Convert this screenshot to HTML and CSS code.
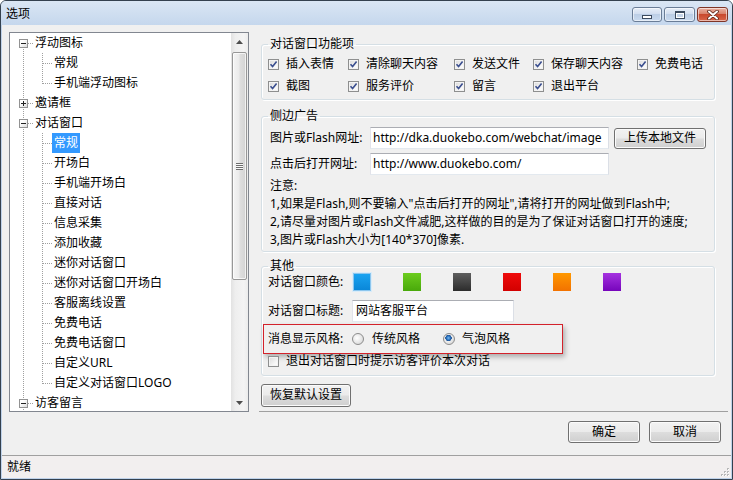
FILE: index.html
```html
<!DOCTYPE html>
<html lang="zh-CN">
<head>
<meta charset="utf-8">
<title>选项</title>
<link rel="stylesheet" href="styles.css">
</head>
<body>
<div class="window">
  <div class="titlebar">
    <span class="title">选项</span>
    <div class="caps">
      <span class="cap cap-min"><span class="g-min"></span></span>
      <span class="cap cap-max"><span class="g-max"></span></span>
      <span class="cap cap-close">
        <svg width="12" height="10" viewBox="0 0 12 10"><path d="M2 1.5 L10 8.5 M10 1.5 L2 8.5" stroke="#5b2418" stroke-width="3.6" stroke-linecap="round"/><path d="M2 1.5 L10 8.5 M10 1.5 L2 8.5" stroke="#fff" stroke-width="2" stroke-linecap="round"/></svg>
      </span>
    </div>
  </div>
  <div class="client">
    <div class="main">
      <div class="tree">
        <div class="tree-items">
          <div class="row"><span class="cell first"><span class="exp minus"></span></span><span class="label">浮动图标</span></div>
          <div class="row"><span class="cell v"></span><span class="cell tee"></span><span class="label">常规</span></div>
          <div class="row"><span class="cell v"></span><span class="cell last"></span><span class="label">手机端浮动图标</span></div>
          <div class="row"><span class="cell mid"><span class="exp plus"></span></span><span class="label">邀请框</span></div>
          <div class="row"><span class="cell mid"><span class="exp minus"></span></span><span class="label">对话窗口</span></div>
          <div class="row"><span class="cell v"></span><span class="cell tee"></span><span class="label selected">常规</span></div>
          <div class="row"><span class="cell v"></span><span class="cell tee"></span><span class="label">开场白</span></div>
          <div class="row"><span class="cell v"></span><span class="cell tee"></span><span class="label">手机端开场白</span></div>
          <div class="row"><span class="cell v"></span><span class="cell tee"></span><span class="label">直接对话</span></div>
          <div class="row"><span class="cell v"></span><span class="cell tee"></span><span class="label">信息采集</span></div>
          <div class="row"><span class="cell v"></span><span class="cell tee"></span><span class="label">添加收藏</span></div>
          <div class="row"><span class="cell v"></span><span class="cell tee"></span><span class="label">迷你对话窗口</span></div>
          <div class="row"><span class="cell v"></span><span class="cell tee"></span><span class="label">迷你对话窗口开场白</span></div>
          <div class="row"><span class="cell v"></span><span class="cell tee"></span><span class="label">客服离线设置</span></div>
          <div class="row"><span class="cell v"></span><span class="cell tee"></span><span class="label">免费电话</span></div>
          <div class="row"><span class="cell v"></span><span class="cell tee"></span><span class="label">免费电话窗口</span></div>
          <div class="row"><span class="cell v"></span><span class="cell tee"></span><span class="label">自定义URL</span></div>
          <div class="row"><span class="cell v"></span><span class="cell last"></span><span class="label">自定义对话窗口LOGO</span></div>
          <div class="row"><span class="cell mid"><span class="exp minus"></span></span><span class="label">访客留言</span></div>
        </div>
        <div class="vscroll">
          <span class="sb-btn"><svg width="7" height="4" viewBox="0 0 7 4"><path d="M0 4 L3.5 0 L7 4 Z" fill="#4d4d4d"/></svg></span>
          <span class="sb-thumb"><span class="grip"></span></span>
          <span class="sb-btn sb-down"><svg width="7" height="4" viewBox="0 0 7 4"><path d="M0 0 L3.5 4 L7 0 Z" fill="#4d4d4d"/></svg></span>
        </div>
      </div>

      <div class="panel">
        <fieldset class="group g1">
          <legend>对话窗口功能项</legend>
          <div class="checks">
            <span class="chk"><span class="cb"><svg width="9" height="9" viewBox="0 0 9 9"><path d="M1.5 4.2 L3.6 6.6 L7.6 1.6" fill="none" stroke="#3b4f8f" stroke-width="1.6"/></svg></span>插入表情</span>
            <span class="chk"><span class="cb"><svg width="9" height="9" viewBox="0 0 9 9"><path d="M1.5 4.2 L3.6 6.6 L7.6 1.6" fill="none" stroke="#3b4f8f" stroke-width="1.6"/></svg></span>清除聊天内容</span>
            <span class="chk"><span class="cb"><svg width="9" height="9" viewBox="0 0 9 9"><path d="M1.5 4.2 L3.6 6.6 L7.6 1.6" fill="none" stroke="#3b4f8f" stroke-width="1.6"/></svg></span>发送文件</span>
            <span class="chk"><span class="cb"><svg width="9" height="9" viewBox="0 0 9 9"><path d="M1.5 4.2 L3.6 6.6 L7.6 1.6" fill="none" stroke="#3b4f8f" stroke-width="1.6"/></svg></span>保存聊天内容</span>
            <span class="chk"><span class="cb"><svg width="9" height="9" viewBox="0 0 9 9"><path d="M1.5 4.2 L3.6 6.6 L7.6 1.6" fill="none" stroke="#3b4f8f" stroke-width="1.6"/></svg></span>免费电话</span>
            <span class="chk"><span class="cb"><svg width="9" height="9" viewBox="0 0 9 9"><path d="M1.5 4.2 L3.6 6.6 L7.6 1.6" fill="none" stroke="#3b4f8f" stroke-width="1.6"/></svg></span>截图</span>
            <span class="chk"><span class="cb"><svg width="9" height="9" viewBox="0 0 9 9"><path d="M1.5 4.2 L3.6 6.6 L7.6 1.6" fill="none" stroke="#3b4f8f" stroke-width="1.6"/></svg></span>服务评价</span>
            <span class="chk"><span class="cb"><svg width="9" height="9" viewBox="0 0 9 9"><path d="M1.5 4.2 L3.6 6.6 L7.6 1.6" fill="none" stroke="#3b4f8f" stroke-width="1.6"/></svg></span>留言</span>
            <span class="chk"><span class="cb"><svg width="9" height="9" viewBox="0 0 9 9"><path d="M1.5 4.2 L3.6 6.6 L7.6 1.6" fill="none" stroke="#3b4f8f" stroke-width="1.6"/></svg></span>退出平台</span>
          </div>
        </fieldset>

        <fieldset class="group g2">
          <legend>侧边广告</legend>
          <div class="frow">
            <span class="flabel">图片或Flash网址:</span>
            <span class="tb tb-url">http://dka.duokebo.com/webchat/image</span>
            <span class="btn btn-upload">上传本地文件</span>
          </div>
          <div class="frow r2">
            <span class="flabel">点击后打开网址:</span>
            <span class="tb tb-url">http://www.duokebo.com/</span>
          </div>
          <div class="notes">
            <p>注意:</p>
            <p>1,如果是Flash,则不要输入"点击后打开的网址",请将打开的网址做到Flash中;</p>
            <p>2,请尽量对图片或Flash文件减肥,这样做的目的是为了保证对话窗口打开的速度;</p>
            <p>3,图片或Flash大小为[140*370]像素.</p>
          </div>
        </fieldset>

        <fieldset class="group g3">
          <legend>其他</legend>
          <div class="crow">
            <span class="clabel">对话窗口颜色:</span>
            <span class="sw sw-blue"></span>
            <span class="sw sw-green"></span>
            <span class="sw sw-gray"></span>
            <span class="sw sw-red"></span>
            <span class="sw sw-orange"></span>
            <span class="sw sw-purple"></span>
          </div>
          <div class="trow">
            <span class="tlabel">对话窗口标题:</span>
            <span class="tb tb-title">网站客服平台</span>
          </div>
          <div class="style-row">
            <span class="tlabel">消息显示风格:</span>
            <span class="rb"></span><span class="rlabel">传统风格</span>
            <span class="rb on rb2"></span><span class="rlabel">气泡风格</span>
          </div>
          <div class="exit-row">
            <span class="cb"></span><span class="exit-label">退出对话窗口时提示访客评价本次对话</span>
          </div>
        </fieldset>

        <span class="btn btn-reset">恢复默认设置</span>
        <div class="sep"></div>
      </div>
    </div>

    <div class="footer">
      <span class="btn btn-dlg">确定</span>
      <span class="btn btn-dlg">取消</span>
    </div>

    <div class="status">
      <span class="status-text">就绪</span>
      <svg class="grip-corner" width="11" height="11" viewBox="0 0 11 11">
        <g fill="#b8b8b8">
          <rect x="8" y="2" width="2" height="2"/>
          <rect x="5" y="5" width="2" height="2"/><rect x="8" y="5" width="2" height="2"/>
          <rect x="2" y="8" width="2" height="2"/><rect x="5" y="8" width="2" height="2"/><rect x="8" y="8" width="2" height="2"/>
        </g>
        <g fill="#fff">
          <rect x="9" y="3" width="1" height="1"/>
          <rect x="6" y="6" width="1" height="1"/><rect x="9" y="6" width="1" height="1"/>
          <rect x="3" y="9" width="1" height="1"/><rect x="6" y="9" width="1" height="1"/><rect x="9" y="9" width="1" height="1"/>
        </g>
      </svg>
    </div>
  </div>
</div>
</body>
</html>
```

FILE: styles.css
```css
* { box-sizing: border-box; }
html, body { margin: 0; padding: 0; }
body {
  width: 733px;
  height: 480px;
  overflow: hidden;
  background: #ffffff;
  font-family: "Noto Sans", "Noto Sans CJK SC", sans-serif;
  font-size: 12px;
  line-height: 1.2;
  color: #000;
}

.window {
  width: 733px;
  height: 480px;
  border: 1px solid #34414f;
  border-radius: 6px 6px 0 0;
  display: flex;
  flex-direction: column;
  overflow: hidden;
  background: #c6d8ee;
}

/* title bar */
.titlebar {
  height: 24px;
  flex: none;
  display: flex;
  justify-content: space-between;
  align-items: flex-start;
  padding: 0 4px 0 5px;
  background: linear-gradient(#dae6f4, #c5d7ed);
}
.title { line-height: 26px; height: 24px; }
.caps { display: flex; gap: 2px; padding-top: 6px; }
.cap {
  width: 31px;
  height: 15px;
  border: 1px solid #6a7d97;
  border-radius: 3px;
  display: flex;
  justify-content: center;
  align-items: center;
  background: linear-gradient(#e7eef8, #d2def0 45%, #bccee6 50%, #c9daef);
  box-shadow: inset 0 0 0 1px rgba(255,255,255,.55);
}
.cap-min { width: 30px; align-items: flex-start; }
.g-min {
  width: 10px; height: 4px;
  margin-top: 7px;
  border: 1px solid #3b4a5e;
  background: #fff;
}
.g-max {
  width: 10px; height: 8px;
  border: 1px solid #3b4a5e;
  border-top-width: 2px;
  background: #c5d5ea;
  box-shadow: inset 0 0 0 1px #fff;
}
.cap-close {
  border-color: #7f3527;
  background: linear-gradient(#eab3a4, #d9826c 45%, #c9492e 50%, #d8664a);
}

/* client */
.client {
  flex: 1;
  display: flex;
  flex-direction: column;
  background: #f0f0f0;
  border: solid #bfd2ea;
  border-width: 0 1px 1px 1px;
}
.main {
  display: flex;
  gap: 10px;
  padding: 7px 3px 0 7px;
}

/* tree */
.tree {
  flex: none;
  width: 240px;
  height: 380px;
  border: 1px solid #828790;
  background: #fff;
  display: flex;
}
.tree-items {
  flex: 1;
  overflow: hidden;
  padding-left: 4px;
}
.row {
  display: flex;
  height: 20px;
  align-items: center;
}
.cell {
  flex: none;
  width: 19px;
  height: 20px;
  display: flex;
  align-items: center;
}
.cell.v {
  background: repeating-linear-gradient(to bottom, #a0a0a0 0 1px, transparent 1px 2px) 9px 0 / 1px 20px no-repeat;
}
.cell.tee {
  background:
    repeating-linear-gradient(to right, #a0a0a0 0 1px, transparent 1px 2px) 10px 10px / 9px 1px no-repeat,
    repeating-linear-gradient(to bottom, #a0a0a0 0 1px, transparent 1px 2px) 9px 0 / 1px 20px no-repeat;
}
.cell.last {
  background:
    repeating-linear-gradient(to right, #a0a0a0 0 1px, transparent 1px 2px) 10px 10px / 9px 1px no-repeat,
    repeating-linear-gradient(to bottom, #a0a0a0 0 1px, transparent 1px 2px) 9px 0 / 1px 11px no-repeat;
}
.cell.first {
  background:
    repeating-linear-gradient(to right, #a0a0a0 0 1px, transparent 1px 2px) 14px 10px / 5px 1px no-repeat,
    repeating-linear-gradient(to bottom, #a0a0a0 0 1px, transparent 1px 2px) 9px 10px / 1px 10px no-repeat;
}
.cell.mid {
  background:
    repeating-linear-gradient(to right, #a0a0a0 0 1px, transparent 1px 2px) 14px 10px / 5px 1px no-repeat,
    repeating-linear-gradient(to bottom, #a0a0a0 0 1px, transparent 1px 2px) 9px 0 / 1px 20px no-repeat;
}
.exp {
  width: 9px;
  height: 9px;
  margin-left: 5px;
  margin-top: 1px;
  border: 1px solid #929292;
  background: linear-gradient(135deg, #ffffff 30%, #dcdcdc);
}
.exp.minus {
  background:
    linear-gradient(#222, #222) center / 5px 1px no-repeat,
    linear-gradient(135deg, #ffffff 30%, #dcdcdc);
}
.exp.plus {
  background:
    linear-gradient(#222, #222) center / 5px 1px no-repeat,
    linear-gradient(#222, #222) center / 1px 5px no-repeat,
    linear-gradient(135deg, #ffffff 30%, #dcdcdc);
}
.label {
  padding: 0 2px;
  height: 20px;
  line-height: 20px;
  white-space: nowrap;
}
.label.selected {
  background: #3399ff;
  color: #fff;
}

/* scrollbar */
.vscroll {
  flex: none;
  width: 17px;
  display: flex;
  flex-direction: column;
  background: linear-gradient(to right, #e2e2e2, #eeeeee 25%, #f4f4f4 75%, #ececec);
}
.sb-btn {
  height: 17px;
  flex: none;
  display: flex;
  justify-content: center;
  align-items: center;
}
.sb-down { margin-top: auto; }
.sb-thumb {
  margin: 2px 1px 0;
  height: 228px;
  border: 1px solid #979797;
  border-radius: 2px;
  background: linear-gradient(to right, #f4f4f4, #ebebeb 45%, #dedede 55%, #d3d3d3);
  box-shadow: inset 0 0 0 1px rgba(255,255,255,.7);
  display: flex;
  justify-content: center;
  align-items: center;
}
.grip {
  width: 7px;
  height: 7px;
  background: repeating-linear-gradient(to bottom, #6d6d6d 0 1px, #fafafa 1px 2px);
}

/* right panel */
.panel {
  flex: 1;
  display: flex;
  flex-direction: column;
  padding: 5px 13px 0 2px;
}
.group {
  margin: 0;
  padding: 0 6px 2px 6px;
  border: 1px solid #d5dfe5;
  border-radius: 3px;
  min-inline-size: 0;
  box-shadow: inset 1px 1px 0 #fff, 1px 1px 0 #fff;
}
.group legend {
  padding: 0 2px;
  height: 14px;
  line-height: 14px;
  white-space: nowrap;
}
.g1 { padding-top: 2px; }
.g2 { margin-top: 9px; padding-top: 4px; }
.g3 { margin-top: 7px; padding-bottom: 7px; }

.checks {
  display: grid;
  grid-template-columns: 80px 106px 79px 104px auto;
  grid-auto-rows: 22px;
}
.chk {
  display: flex;
  align-items: center;
  gap: 7px;
  white-space: nowrap;
  line-height: 14px;
}
.cb {
  flex: none;
  width: 11px;
  height: 11px;
  border: 1px solid #8e8f8f;
  background: linear-gradient(135deg, #d9d9d9, #f7f7f7 70%, #ffffff);
  box-shadow: inset 0 0 0 1px #f3f3f3;
  display: flex;
  align-items: center;
  justify-content: center;
}
.cb svg { display: block; }

.frow {
  display: flex;
  align-items: center;
  height: 22px;
  padding-left: 2px;
}
.frow.r2 { margin-top: 4px; }
.flabel { width: 100px; flex: none; white-space: nowrap; }
.tb {
  flex: none;
  height: 22px;
  line-height: 20px;
  padding-left: 2px;
  background: #fff;
  border: 1px solid;
  border-color: #abadb3 #dbdfe6 #e3e9ef #e2e3ea;
  overflow: hidden;
  white-space: nowrap;
}
.tb-url { width: 239px; }
.btn {
  flex: none;
  display: flex;
  justify-content: center;
  align-items: center;
  border: 1px solid #707070;
  border-radius: 3px;
  background: linear-gradient(#f2f2f2, #ebebeb 48%, #dddddd 52%, #cfcfcf);
  box-shadow: inset 0 0 0 1px #fbfbfb;
  white-space: nowrap;
}
.btn-upload { width: 92px; height: 21px; margin-left: 5px; }
.notes { margin-top: 2px; padding-left: 2px; }
.notes p {
  margin: 0;
  height: 18px;
  line-height: 18px;
  white-space: nowrap;
}

.crow {
  display: flex;
  align-items: center;
  height: 18px;
}
.clabel { width: 85px; flex: none; white-space: nowrap; }
.sw { flex: none; width: 18px; height: 18px; margin-right: 32px; }
.sw-blue { background: linear-gradient(#1aa3f0, #0a87d8); border: 1px solid #8cc6ee; box-shadow: 0 0 0 1px #d9ecf9; }
.sw-green { background: linear-gradient(#6ccc1e, #49a90b); }
.sw-gray { background: linear-gradient(#5f5f5f, #2c2c2c); }
.sw-red { background: linear-gradient(#ef0b0b, #d20000); }
.sw-orange { background: linear-gradient(#ff9800, #f27200); }
.sw-purple { background: linear-gradient(#a532e0, #7605bb); }

.trow {
  display: flex;
  align-items: center;
  height: 22px;
  margin-top: 9px;
}
.tlabel { width: 84px; flex: none; white-space: nowrap; }
.tb-title { width: 162px; padding-left: 3px; }

.style-row {
  display: flex;
  align-items: center;
  width: 300px;
  height: 30px;
  margin: 2px 0 0 -5px;
  padding-left: 4px;
  border: 1px solid #d3222b;
  box-shadow: 2px 3px 5px rgba(0,0,0,.28);
  background: #f0f0f0;
}
.rb {
  flex: none;
  width: 12px;
  height: 12px;
  border-radius: 50%;
  border: 1px solid #8c8c8c;
  background: radial-gradient(circle at 40% 40%, #ffffff, #e6e6e6 55%, #cdcdcd);
}
.rb.on {
  background:
    radial-gradient(circle at 45% 40%, #7db9ee 0, #2f78c4 1.8px, #1b4f92 3px, transparent 3.4px),
    radial-gradient(circle at 40% 40%, #ffffff, #e6e6e6 55%, #cdcdcd);
}
.rlabel { margin-left: 8px; white-space: nowrap; }
.rb2 { margin-left: 23px; }
.rb2 + .rlabel { margin-left: 7px; }

.exit-row {
  display: flex;
  align-items: center;
  height: 14px;
}
.exit-label { margin-left: 7px; white-space: nowrap; line-height: 14px; }

.btn-reset {
  align-self: flex-start;
  width: 90px;
  height: 23px;
  margin-top: 8px;
}
.sep {
  margin: auto -13px 0 -2px;
  border-top: 1px solid #a0a0a0;
}

/* footer */
.footer {
  display: flex;
  justify-content: flex-end;
  gap: 9px;
  padding: 9px 10px 12px 0;
}
.btn-dlg { width: 72px; height: 22px; }

/* status */
.status {
  flex: 1;
  display: flex;
  justify-content: space-between;
  align-items: flex-end;
  border-top: 1px solid #a0a0a0;
  background: #f2efef;
  padding: 0 1px 1px 5px;
}
.status-text { line-height: 21px; align-self: center; }
.grip-corner { display: block; }
```
